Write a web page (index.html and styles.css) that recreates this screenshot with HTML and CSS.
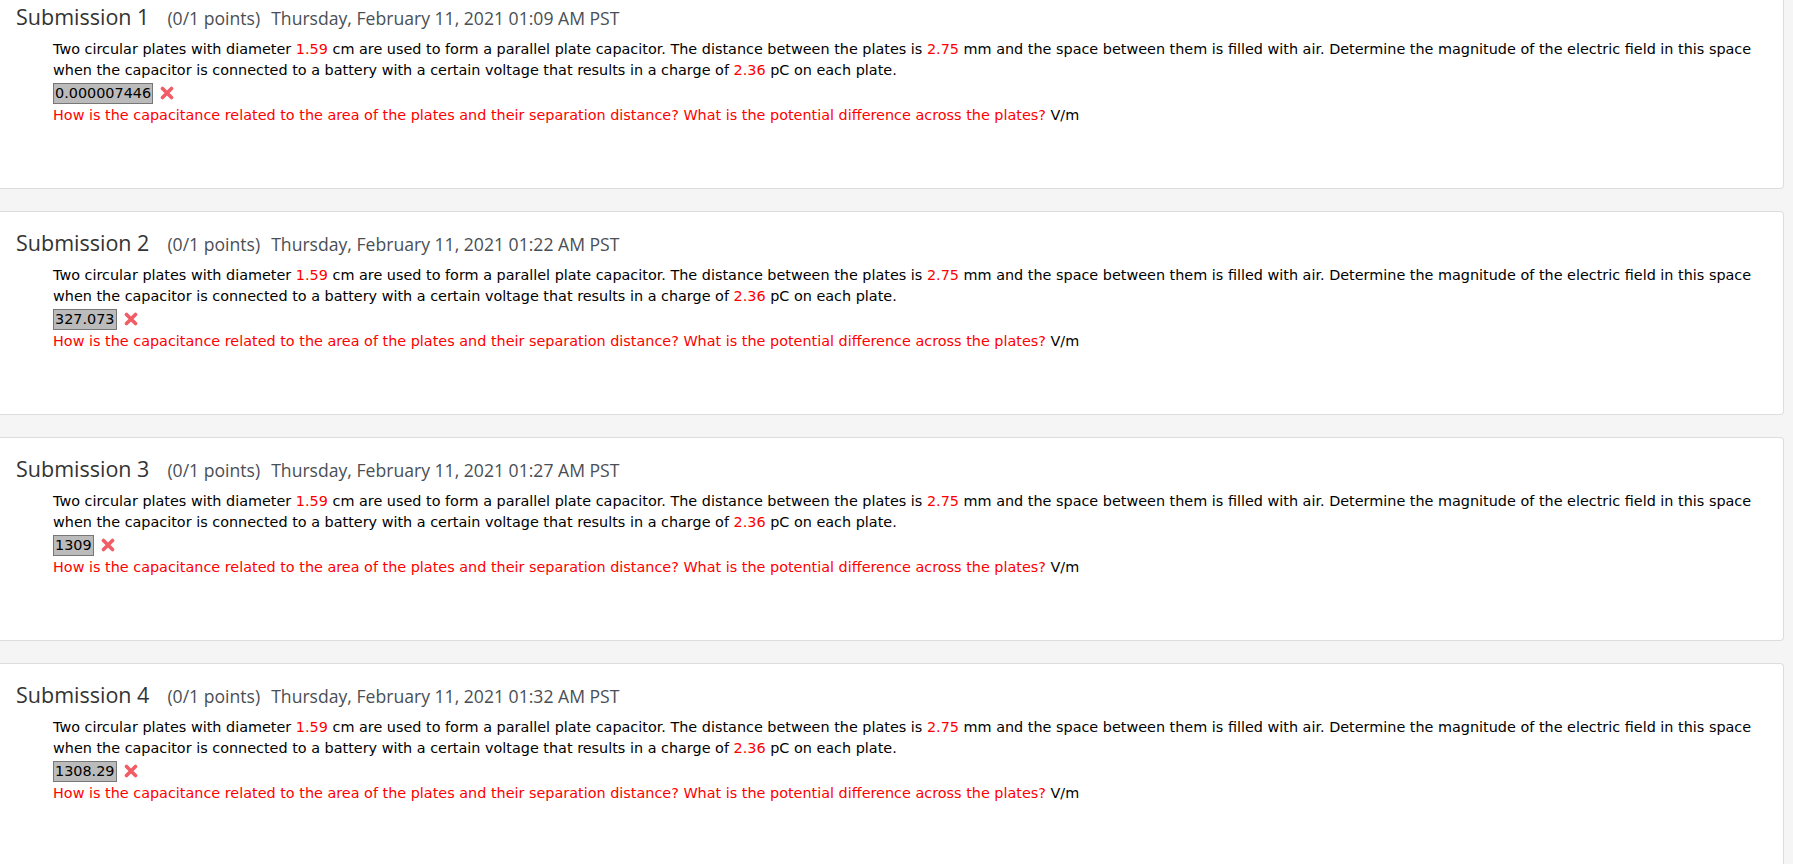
FILE: index.html
```html
<!DOCTYPE html>
<html lang="en">
<head>
  <meta charset="UTF-8" />
  <title>Submissions</title>
  <link rel="stylesheet" href="styles.css">
</head>
<body>
  <div class="submissions">

    <div class="submission">
      <h2 class="sub-head">
        <span class="sub-title">Submission 1</span>
        <span class="sub-points">(0/1 points)</span>
        <span class="sub-date">Thursday, February 11, 2021 01:09 AM PST</span>
      </h2>
      <div class="sub-body">
        <p class="question">Two circular plates with diameter <span class="num">1.59</span> cm are used to form a parallel plate capacitor. The distance between the plates is <span class="num">2.75</span> mm and the space between them is filled with air. Determine the magnitude of the electric field in this space when the capacitor is connected to a battery with a certain voltage that results in a charge of <span class="num">2.36</span> pC on each plate.</p>
        <div class="answer-row">
          <span class="answer">0.000007446</span>
          <svg class="wrong" width="14" height="14" viewBox="0 0 14 14"><path d="M2.5 2.5 L11.5 11.5 M11.5 2.5 L2.5 11.5" /></svg>
        </div>
        <p class="hint">How is the capacitance related to the area of the plates and their separation distance? What is the potential difference across the plates? <span class="unit">V/m</span></p>
      </div>
    </div>

    <div class="submission">
      <h2 class="sub-head">
        <span class="sub-title">Submission 2</span>
        <span class="sub-points">(0/1 points)</span>
        <span class="sub-date">Thursday, February 11, 2021 01:22 AM PST</span>
      </h2>
      <div class="sub-body">
        <p class="question">Two circular plates with diameter <span class="num">1.59</span> cm are used to form a parallel plate capacitor. The distance between the plates is <span class="num">2.75</span> mm and the space between them is filled with air. Determine the magnitude of the electric field in this space when the capacitor is connected to a battery with a certain voltage that results in a charge of <span class="num">2.36</span> pC on each plate.</p>
        <div class="answer-row">
          <span class="answer">327.073</span>
          <svg class="wrong" width="14" height="14" viewBox="0 0 14 14"><path d="M2.5 2.5 L11.5 11.5 M11.5 2.5 L2.5 11.5" /></svg>
        </div>
        <p class="hint">How is the capacitance related to the area of the plates and their separation distance? What is the potential difference across the plates? <span class="unit">V/m</span></p>
      </div>
    </div>

    <div class="submission">
      <h2 class="sub-head">
        <span class="sub-title">Submission 3</span>
        <span class="sub-points">(0/1 points)</span>
        <span class="sub-date">Thursday, February 11, 2021 01:27 AM PST</span>
      </h2>
      <div class="sub-body">
        <p class="question">Two circular plates with diameter <span class="num">1.59</span> cm are used to form a parallel plate capacitor. The distance between the plates is <span class="num">2.75</span> mm and the space between them is filled with air. Determine the magnitude of the electric field in this space when the capacitor is connected to a battery with a certain voltage that results in a charge of <span class="num">2.36</span> pC on each plate.</p>
        <div class="answer-row">
          <span class="answer">1309</span>
          <svg class="wrong" width="14" height="14" viewBox="0 0 14 14"><path d="M2.5 2.5 L11.5 11.5 M11.5 2.5 L2.5 11.5" /></svg>
        </div>
        <p class="hint">How is the capacitance related to the area of the plates and their separation distance? What is the potential difference across the plates? <span class="unit">V/m</span></p>
      </div>
    </div>

    <div class="submission">
      <h2 class="sub-head">
        <span class="sub-title">Submission 4</span>
        <span class="sub-points">(0/1 points)</span>
        <span class="sub-date">Thursday, February 11, 2021 01:32 AM PST</span>
      </h2>
      <div class="sub-body">
        <p class="question">Two circular plates with diameter <span class="num">1.59</span> cm are used to form a parallel plate capacitor. The distance between the plates is <span class="num">2.75</span> mm and the space between them is filled with air. Determine the magnitude of the electric field in this space when the capacitor is connected to a battery with a certain voltage that results in a charge of <span class="num">2.36</span> pC on each plate.</p>
        <div class="answer-row">
          <span class="answer">1308.29</span>
          <svg class="wrong" width="14" height="14" viewBox="0 0 14 14"><path d="M2.5 2.5 L11.5 11.5 M11.5 2.5 L2.5 11.5" /></svg>
        </div>
        <p class="hint">How is the capacitance related to the area of the plates and their separation distance? What is the potential difference across the plates? <span class="unit">V/m</span></p>
      </div>
    </div>

  </div>
</body>
</html>
```

FILE: styles.css
```css
* {
  margin: 0;
  padding: 0;
  box-sizing: border-box;
}

html, body {
  background-color: #f5f5f5;
  font-family: 'DejaVu Sans', Verdana, sans-serif;
  color: #000;
  overflow: hidden;
}

/* page is scrolled a little, first card starts above the fold */
.submissions {
  margin-top: -15px;
  margin-right: 9px;
  display: flex;
  flex-direction: column;
  gap: 22px;
}

.submission {
  background: #fff;
  border: 1px solid #ddd;
  border-left: none;
  border-radius: 0 4px 4px 0;
  height: 204px;
  padding: 19px 16px 0 16px;
}

.sub-head {
  font-family: 'Open Sans', sans-serif;
  font-weight: 400;
  line-height: 24px;
  display: flex;
  align-items: baseline;
}

.sub-title {
  font-size: 21.5px;
  color: #333;
  margin-right: 18px;
}

.sub-points {
  font-size: 17.6px;
  color: #4a4f55;
  margin-right: 11px;
}

.sub-date {
  font-size: 17.6px;
  color: #4a4f55;
}

.sub-body {
  padding-left: 37px;
  margin-top: 9px;
  font-size: 14.4px;
  line-height: 21px;
}

.num {
  color: #f00;
}

.answer-row {
  display: flex;
  align-items: center;
  gap: 7px;
  margin-top: 1px;
  height: 22px;
}

.answer {
  background: #bbb;
  border: 1px solid #777;
  padding: 0 1px;
  line-height: 19px;
}

.wrong {
  fill: none;
  stroke: #f25c66;
  stroke-width: 3.6;
  stroke-linecap: round;
}

.hint {
  color: #f00;
  margin-top: 1px;
}

.unit {
  color: #000;
}
```
